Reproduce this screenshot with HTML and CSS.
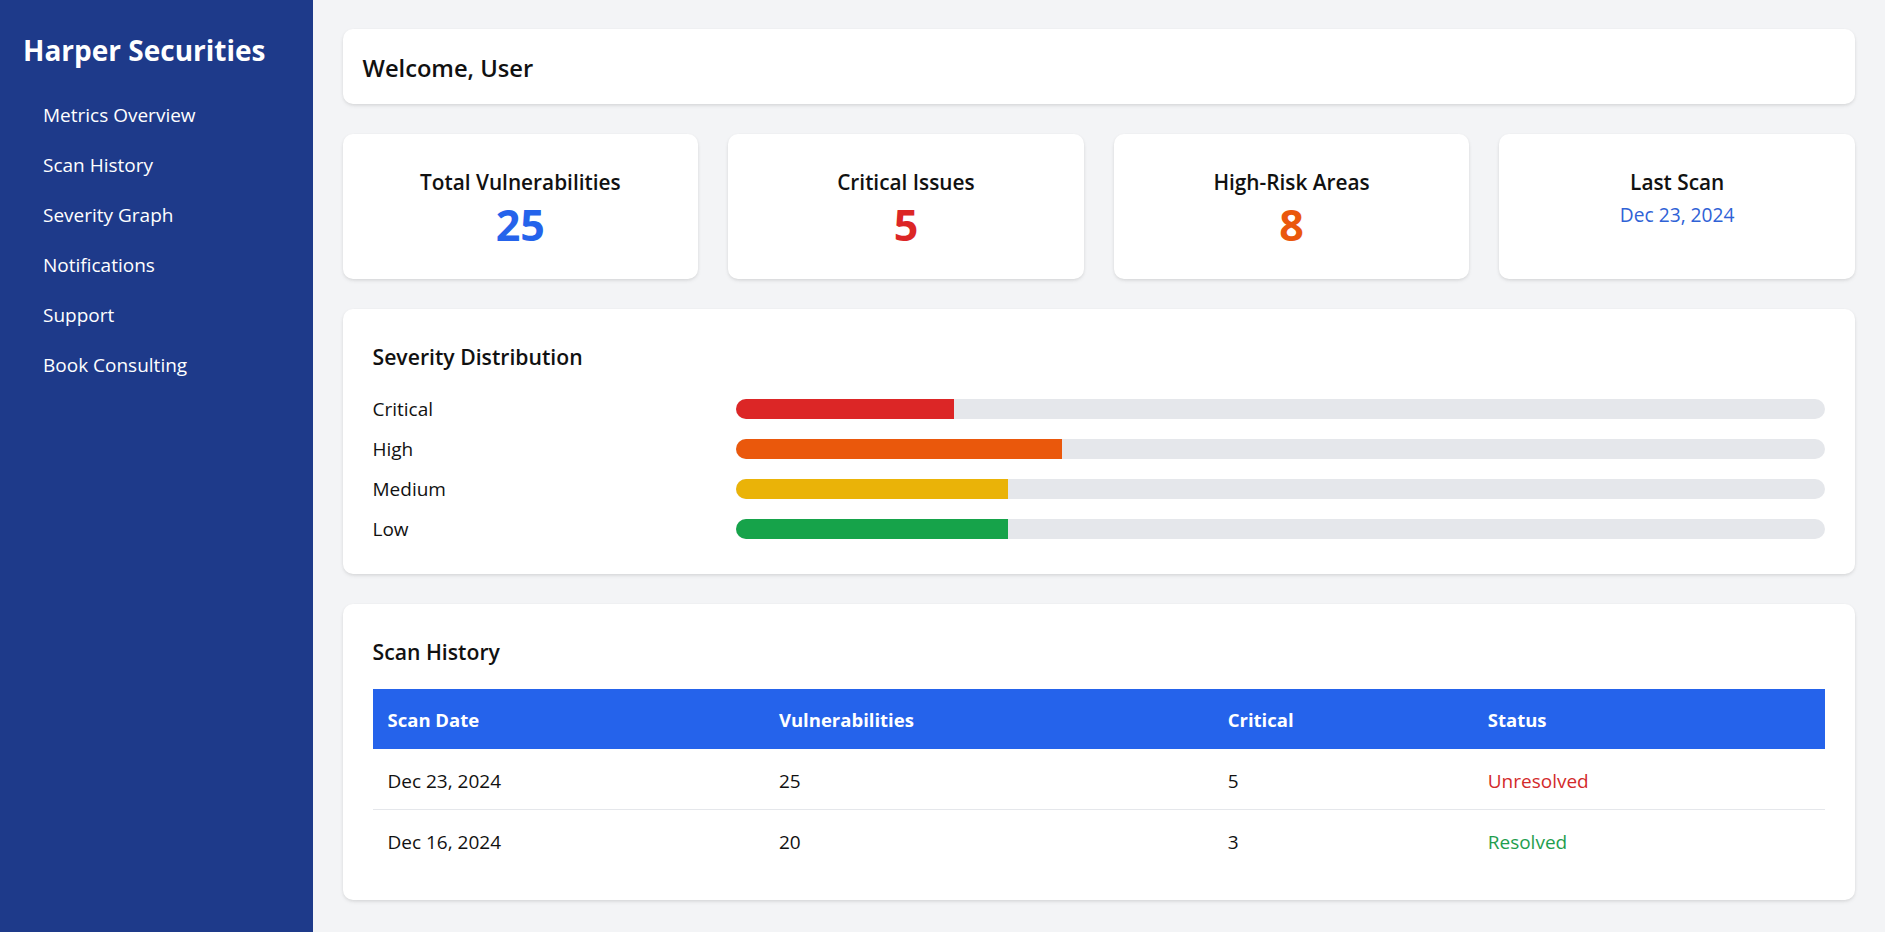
FILE: index.html
```html
<!DOCTYPE html>
<html lang="en">
<head>
<meta charset="utf-8">
<title>Harper Securities</title>
<link rel="stylesheet" href="styles.css">
</head>
<body>
<div class="layout">
  <aside class="sidebar">
    <h1 class="brand">Harper Securities</h1>
    <nav class="nav">
      <a class="nav-link" href="#">Metrics Overview</a>
      <a class="nav-link" href="#">Scan History</a>
      <a class="nav-link" href="#">Severity Graph</a>
      <a class="nav-link" href="#">Notifications</a>
      <a class="nav-link" href="#">Support</a>
      <a class="nav-link" href="#">Book Consulting</a>
    </nav>
  </aside>
  <main class="main">
    <section class="card welcome">
      <h2 class="welcome-title">Welcome, User</h2>
    </section>

    <section class="stats">
      <div class="card stat">
        <h3 class="stat-title">Total Vulnerabilities</h3>
        <p class="stat-value blue">25</p>
      </div>
      <div class="card stat">
        <h3 class="stat-title">Critical Issues</h3>
        <p class="stat-value red">5</p>
      </div>
      <div class="card stat">
        <h3 class="stat-title">High-Risk Areas</h3>
        <p class="stat-value orange">8</p>
      </div>
      <div class="card stat">
        <h3 class="stat-title">Last Scan</h3>
        <p class="stat-date">Dec 23, 2024</p>
      </div>
    </section>

    <section class="card panel">
      <h3 class="panel-title">Severity Distribution</h3>
      <div class="bars">
        <div class="bar-row">
          <span class="bar-label">Critical</span>
          <div class="bar-track"><div class="bar-fill fill-critical" style="width:20%"></div></div>
        </div>
        <div class="bar-row">
          <span class="bar-label">High</span>
          <div class="bar-track"><div class="bar-fill fill-high" style="width:30%"></div></div>
        </div>
        <div class="bar-row">
          <span class="bar-label">Medium</span>
          <div class="bar-track"><div class="bar-fill fill-medium" style="width:25%"></div></div>
        </div>
        <div class="bar-row">
          <span class="bar-label">Low</span>
          <div class="bar-track"><div class="bar-fill fill-low" style="width:25%"></div></div>
        </div>
      </div>
    </section>

    <section class="card panel">
      <h3 class="panel-title">Scan History</h3>
      <table class="history">
        <thead>
          <tr>
            <th class="col-date">Scan Date</th>
            <th class="col-vuln">Vulnerabilities</th>
            <th class="col-crit">Critical</th>
            <th class="col-status">Status</th>
          </tr>
        </thead>
        <tbody>
          <tr class="row-divided">
            <td>Dec 23, 2024</td>
            <td>25</td>
            <td>5</td>
            <td class="status-unresolved">Unresolved</td>
          </tr>
          <tr>
            <td>Dec 16, 2024</td>
            <td>20</td>
            <td>3</td>
            <td class="status-resolved">Resolved</td>
          </tr>
        </tbody>
      </table>
    </section>
  </main>
</div>
</body>
</html>
```

FILE: styles.css
```css
* {
  box-sizing: border-box;
}

html, body {
  margin: 0;
  padding: 0;
  height: 100%;
}

body {
  font-family: "Open Sans", "Noto Sans", sans-serif;
  color: #111111;
  background: #f3f4f6;
}

h1, h2, h3, p {
  margin: 0;
}

.layout {
  display: flex;
  min-height: 100vh;
}

.sidebar {
  width: 312.5px;
  flex-shrink: 0;
  background: #1e3a8a;
  color: #ffffff;
  padding: 30px 23px;
}

.brand {
  font-size: 28px;
  line-height: 40px;
  font-weight: 700;
  margin-bottom: 19px;
}

.nav {
  display: flex;
  flex-direction: column;
}

.nav-link {
  display: block;
  color: #ffffff;
  text-decoration: none;
  font-size: 19px;
  line-height: 30px;
  padding: 11px 20px 9px 20px;
}

.main {
  flex: 1;
  padding: 29px 30px 30px 30px;
  display: flex;
  flex-direction: column;
  gap: 30px;
}

.card {
  background: #ffffff;
  border-radius: 10px;
  box-shadow: 0 2px 5px -1px rgba(0, 0, 0, 0.1), 0 1px 3px rgba(0, 0, 0, 0.06);
}

.welcome {
  padding: 22px 20px 18px 20px;
}

.welcome-title {
  font-size: 23.7px;
  line-height: 35px;
  font-weight: 600;
}

.stats {
  display: grid;
  grid-template-columns: repeat(4, 1fr);
  gap: 30px;
}

.stat {
  padding: 31px 30px 29px 30px;
  text-align: center;
}

.stat-title {
  font-size: 20.8px;
  line-height: 35px;
  font-weight: 600;
}

.stat-value {
  font-size: 43px;
  line-height: 50px;
  font-weight: 700;
}

.stat-date {
  font-size: 19.2px;
  line-height: 30px;
  color: #2f62d6;
}

.blue { color: #2563eb; }
.red { color: #dc2626; }
.orange { color: #ea580c; }

.panel {
  padding: 30px;
}

.panel-title {
  font-size: 21.2px;
  line-height: 35px;
  font-weight: 600;
  margin-bottom: 20px;
}

.bars {
  display: flex;
  flex-direction: column;
  gap: 10px;
}

.bar-row {
  display: flex;
  align-items: center;
}

.bar-label {
  width: 25%;
  font-size: 19px;
  line-height: 30px;
}

.bar-track {
  width: 75%;
  height: 20px;
  background: #e5e7eb;
  border-radius: 9999px;
  overflow: hidden;
}

.bar-fill {
  height: 100%;
}

.fill-critical { background: #dc2626; }
.fill-high { background: #ea580c; }
.fill-medium { background: #eab308; }
.fill-low { background: #16a34a; }

.history {
  width: 100%;
  border-collapse: collapse;
  table-layout: fixed;
  font-size: 19px;
  line-height: 30px;
}

.history th {
  background: #2563eb;
  color: #ffffff;
  font-size: 18.5px;
  font-weight: 700;
  text-align: left;
  padding: 16px 15px 14px 15px;
}

.history td {
  padding: 16.5px 15px 13.5px 15px;
  text-align: left;
}

.col-date { width: 26.95%; }
.col-vuln { width: 30.9%; }
.col-crit { width: 17.9%; }
.col-status { width: 24.25%; }

.row-divided td {
  border-bottom: 1px solid #e5e7eb;
}

.status-unresolved { color: #d32a2a; }
.status-resolved { color: #1f9e4e; }
```
